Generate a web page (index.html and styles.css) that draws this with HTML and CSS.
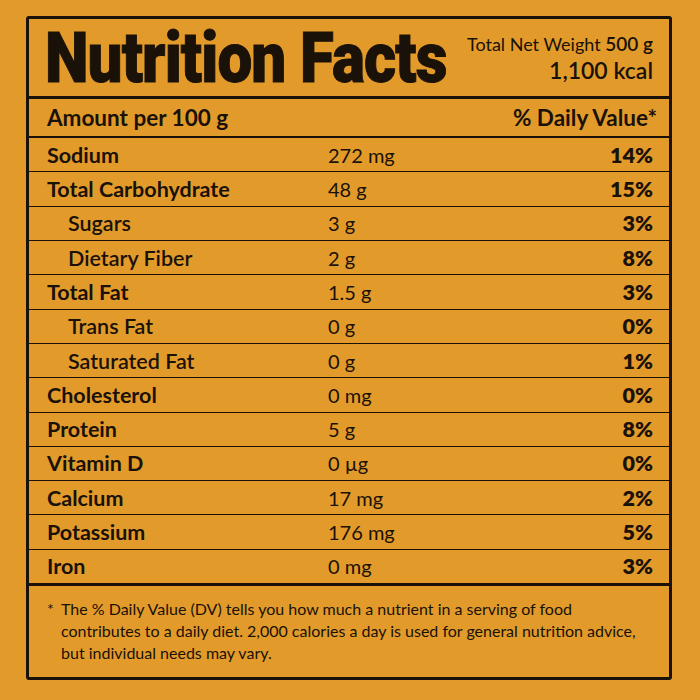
FILE: index.html
```html
<!DOCTYPE html>
<html>
<head>
<meta charset="utf-8">
<link rel="stylesheet" href="styles.css">
</head>
<body>
<div class="label">
  <div class="header">
    <h1 class="title">Nutrition Facts</h1>
    <div class="net">
      <div class="net-weight">Total Net Weight <span class="net-num">500 g</span></div>
      <div class="kcal">1,100 kcal</div>
    </div>
  </div>
  <div class="amount">
    <span>Amount per 100 g</span>
    <span>% Daily Value*</span>
  </div>
  <div class="rows">
    <div class="row"><span class="name">Sodium</span><span class="val">272 mg</span><span class="pct">14%</span></div>
    <div class="row"><span class="name">Total Carbohydrate</span><span class="val">48 g</span><span class="pct">15%</span></div>
    <div class="row sub"><span class="name">Sugars</span><span class="val">3 g</span><span class="pct">3%</span></div>
    <div class="row sub"><span class="name">Dietary Fiber</span><span class="val">2 g</span><span class="pct">8%</span></div>
    <div class="row"><span class="name">Total Fat</span><span class="val">1.5 g</span><span class="pct">3%</span></div>
    <div class="row sub"><span class="name">Trans Fat</span><span class="val">0 g</span><span class="pct">0%</span></div>
    <div class="row sub"><span class="name">Saturated Fat</span><span class="val">0 g</span><span class="pct">1%</span></div>
    <div class="row"><span class="name">Cholesterol</span><span class="val">0 mg</span><span class="pct">0%</span></div>
    <div class="row"><span class="name">Protein</span><span class="val">5 g</span><span class="pct">8%</span></div>
    <div class="row"><span class="name">Vitamin D</span><span class="val">0 µg</span><span class="pct">0%</span></div>
    <div class="row"><span class="name">Calcium</span><span class="val">17 mg</span><span class="pct">2%</span></div>
    <div class="row"><span class="name">Potassium</span><span class="val">176 mg</span><span class="pct">5%</span></div>
    <div class="row"><span class="name">Iron</span><span class="val">0 mg</span><span class="pct">3%</span></div>
  </div>
  <div class="foot">
    <span class="star">*</span>
    <p class="foot-text">The % Daily Value (DV) tells you how much a nutrient in a serving of food contributes to a daily diet. 2,000 calories a day is used for general nutrition advice, but individual needs may vary.</p>
  </div>
</div>
</body>
</html>
```
FILE: styles.css
```css
html, body {
  margin: 0;
  padding: 0;
}
body {
  width: 700px;
  height: 700px;
  background: #e29b2b;
  color: #1a1108;
  font-family: Lato, "Noto Sans", sans-serif;
  padding-top: 16px;
  box-sizing: border-box;
}
.label {
  margin-left: 26px;
  width: 646px;
  height: 664px;
  box-sizing: border-box;
  border: 3px solid #1a1108;
  border-radius: 3px;
  display: flex;
  flex-direction: column;
}
.header {
  height: 77px;
  display: flex;
  justify-content: space-between;
  align-items: center;
  padding: 0 16px 0 16px;
  border-bottom: 3px solid #1a1108;
}
.title {
  flex: 1 1 auto;
  min-width: 0;
  margin: 0;
  font-family: Roboto, sans-serif;
  font-weight: 900;
  font-size: 70px;
  line-height: 1;
  letter-spacing: -1px;
  transform: scaleX(0.885);
  transform-origin: left center;
  white-space: nowrap;
  -webkit-text-stroke: 1px #1a1108;
}
.net {
  flex: none;
  text-align: right;
  line-height: 1.25;
  white-space: nowrap;
  padding-top: 2px;
}
.net-weight {
  font-size: 18px;
}
.net-num {
  font-size: 19px;
  font-weight: 600;
}
.kcal {
  font-size: 23px;
  font-weight: 600;
}
.amount {
  height: 37px;
  display: flex;
  justify-content: space-between;
  align-items: center;
  padding: 0 12px 0 18px;
  font-size: 22.5px;
  font-weight: 700;
  border-bottom: 2px solid #1a1108;
}
.rows {
  height: 445px;
  display: flex;
  flex-direction: column;
  border-bottom: 3px solid #1a1108;
}
.row {
  flex: 1;
  display: grid;
  grid-template-columns: 281px 1fr auto;
  align-items: center;
  padding: 0 16px 0 18px;
  font-size: 21.5px;
}
.row + .row {
  border-top: 1.5px solid #1a1108;
}
.name {
  font-weight: 700;
}
.sub .name {
  font-weight: 600;
  padding-left: 21px;
}
.val {
  font-size: 20px;
  font-weight: 400;
}
.pct {
  font-weight: 800;
}
.foot {
  flex: 1;
  display: flex;
  padding: 12px 18px 0 18px;
  font-size: 16px;
  line-height: 22px;
}
.star {
  width: 14px;
  flex: none;
}
.foot-text {
  margin: 0;
}
```
